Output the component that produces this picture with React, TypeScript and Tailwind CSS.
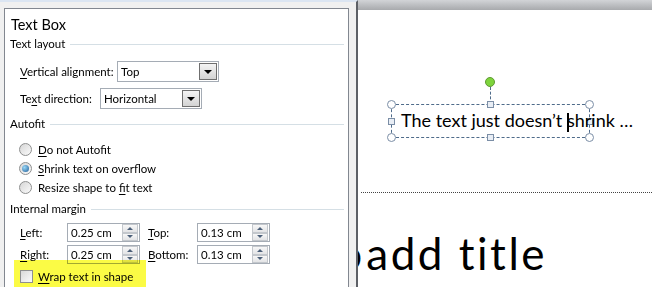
import React from 'react';

const uiFont = { fontFamily: 'Lato, "Open Sans", sans-serif' };
const slideFont = { fontFamily: 'Lato, "Open Sans", sans-serif' };

function U({ children }: { children: React.ReactNode }) {
  return <span className="underline decoration-1 underline-offset-[2px]">{children}</span>;
}

function Section({ label }: { label: string }) {
  return (
    <div className="flex items-center h-4">
      <span className="text-[11.5px] leading-4">{label}</span>
      <div className="flex-1 h-px bg-[#d5dfe5] ml-[5px] mr-1" />
    </div>
  );
}

function Dropdown({ value }: { value: string }) {
  return (
    <div className="flex h-[21px] w-[102px] border border-[#a5acb5] bg-white">
      <span className="flex-1 pl-[3px] text-[11.5px] leading-[19px]">{value}</span>
      <div className="w-[18px] h-[17px] m-px border border-[#6f6f6f] bg-gradient-to-b from-[#f4f4f4] to-[#d3d3d3] flex items-center justify-center">
        <div className="w-0 h-0 border-l-4 border-r-4 border-t-4 border-l-transparent border-r-transparent border-t-black" />
      </div>
    </div>
  );
}

function SpinBtn({ up }: { up?: boolean }) {
  return (
    <div className="flex-1 border border-[#c3c7cc] bg-gradient-to-b from-[#f7f7f7] to-[#e3e4e6] flex items-center justify-center">
      <div
        className={`w-0 h-0 border-l-[3px] border-r-[3px] border-l-transparent border-r-transparent ${
          up ? 'border-b-[3px] border-b-[#4c607a]' : 'border-t-[3px] border-t-[#4c607a]'
        }`}
      />
    </div>
  );
}

function Spinner({ value }: { value: string }) {
  return (
    <div className="flex h-[19px] w-[73px] border border-[#a5acb5] bg-white">
      <span className="flex-1 min-w-0 pl-[3px] text-[11.5px] leading-[17px] whitespace-nowrap">{value}</span>
      <div className="w-[16px] shrink-0 flex flex-col mr-px">
        <SpinBtn up />
        <SpinBtn />
      </div>
    </div>
  );
}

function Radio({ checked }: { checked?: boolean }) {
  return (
    <div className="w-[13px] h-[13px] rounded-full border border-[#8e8f8f] bg-gradient-to-br from-[#d6d6d6] to-[#fbfbfb] flex items-center justify-center">
      {checked && (
        <div className="w-[7px] h-[7px] rounded-full bg-[radial-gradient(circle_at_35%_35%,#9ad8f7,#1f5d98)]" />
      )}
    </div>
  );
}

function RadioRow({ checked, children }: { checked?: boolean; children: React.ReactNode }) {
  return (
    <div className="flex items-center h-[19px] pl-[9px] gap-[6px]">
      <Radio checked={checked} />
      <span className="text-[11.5px] leading-4 whitespace-nowrap">{children}</span>
    </div>
  );
}

function Handle({ round, x, y }: { round?: boolean; x: number; y: number }) {
  const size = round ? 9 : 7;
  return (
    <div
      className={`absolute border border-[#7b8ea6] ${round ? 'rounded-full bg-white' : 'bg-[#e9eef5]'}`}
      style={{ left: x - size / 2, top: y - size / 2, width: size, height: size }}
    />
  );
}

export default function App() {
  return (
    <div className="w-[652px] h-[287px] flex overflow-hidden bg-white text-black" style={uiFont}>
      <div className="relative z-10 w-[358px] h-full shrink-0 bg-[#f0f0f0] border-t-2 border-t-[#dbe5f2] border-r-2 border-r-[#5d6066] pl-1 pt-[6px]">
        <div className="w-[345px] h-[300px] bg-white border border-[#828790] pl-[5px]">
          <div className="h-[27px] pt-[6px] pl-px text-[14.5px] leading-5">Text Box</div>
          <Section label="Text layout" />

          <div className="flex items-center mt-[9px] pl-[10px]">
            <span className="w-[97px] text-[11.5px] leading-4 whitespace-nowrap">
              <U>V</U>ertical alignment:
            </span>
            <Dropdown value="Top" />
          </div>
          <div className="flex items-center mt-[6px] pl-[10px]">
            <span className="w-[80px] text-[11.5px] leading-4 whitespace-nowrap">
              Te<U>x</U>t direction:
            </span>
            <Dropdown value="Horizontal" />
          </div>

          <div className="mt-[7px]">
            <Section label="Autofit" />
          </div>
          <div className="mt-[8px]">
            <RadioRow>
              <U>D</U>o not Autofit
            </RadioRow>
            <RadioRow checked>
              <U>S</U>hrink text on overflow
            </RadioRow>
            <RadioRow>
              Resize shape to <U>f</U>it text
            </RadioRow>
          </div>

          <div className="mt-[4px]">
            <Section label="Internal margin" />
          </div>
          <div className="relative flex items-center mt-[6px] pl-[10px]">
            <span className="w-[47px] text-[11.5px] leading-4">
              <U>L</U>eft:
            </span>
            <Spinner value="0.25 cm" />
            <span className="w-[49px] ml-[8px] text-[11.5px] leading-4">
              <U>T</U>op:
            </span>
            <Spinner value="0.13 cm" />
          </div>
          <div className="relative flex items-center mt-[3px] pl-[10px]">
            <span className="w-[47px] text-[11.5px] leading-4">
              <U>R</U>ight:
            </span>
            <Spinner value="0.25 cm" />
            <span className="w-[49px] ml-[8px] text-[11.5px] leading-4">
              <U>B</U>ottom:
            </span>
            <Spinner value="0.13 cm" />
          </div>
          <div className="relative -mt-[4px] ml-1 w-[132px] h-[27px] bg-[#fbfb45] mix-blend-multiply flex items-start pt-[9px] pl-[6px] gap-[5px]">
            <div className="mt-px w-[13px] h-[13px] border border-[#8e8f8f] bg-gradient-to-br from-[#d9d9d9] to-[#fbfbfb]" />
            <span className="text-[11.5px] leading-4 whitespace-nowrap">
              <U>W</U>rap text in shape
            </span>
          </div>
        </div>
      </div>

      <div className="flex-1 flex flex-col min-w-0">
        <div className="h-[10px] shrink-0 bg-gradient-to-b from-[#d2d4d7] to-[#a8aaad]" />
        <div className="relative flex-1 bg-white" style={slideFont}>
          <div className="absolute left-[127px] top-[67px] w-[10px] h-[10px] rounded-full bg-[#7ed43c] border border-[#5f9a33]" />
          <div className="absolute left-[132px] top-[77px] h-[17px] border-l border-dashed border-[#4f6b8a]" />
          <div className="absolute left-[33px] top-[94px] w-[199px] h-[34px] border border-dashed border-[#4f6b8a]" />
          <Handle round x={33} y={94} />
          <Handle round x={231} y={94} />
          <Handle round x={33} y={127} />
          <Handle round x={231} y={127} />
          <Handle x={132} y={94} />
          <Handle x={132} y={127} />
          <Handle x={33} y={111} />
          <Handle x={231} y={111} />
          <div className="absolute left-[43px] top-[98px] whitespace-nowrap text-[18px] leading-6">
            The text just doesn’t shrink …
          </div>
          <div className="absolute left-[209px] top-[103px] w-[2px] h-[19px] bg-black" />
          <div className="absolute left-[3px] right-0 top-[182px] border-t border-dotted border-[#444]" />
          <div className="absolute right-[105px] top-[217px] whitespace-nowrap text-[44px] leading-[52px] tracking-[2.5px]">
            <span className="mr-[-12px]">Click to</span> add title
          </div>
        </div>
      </div>
    </div>
  );
}
